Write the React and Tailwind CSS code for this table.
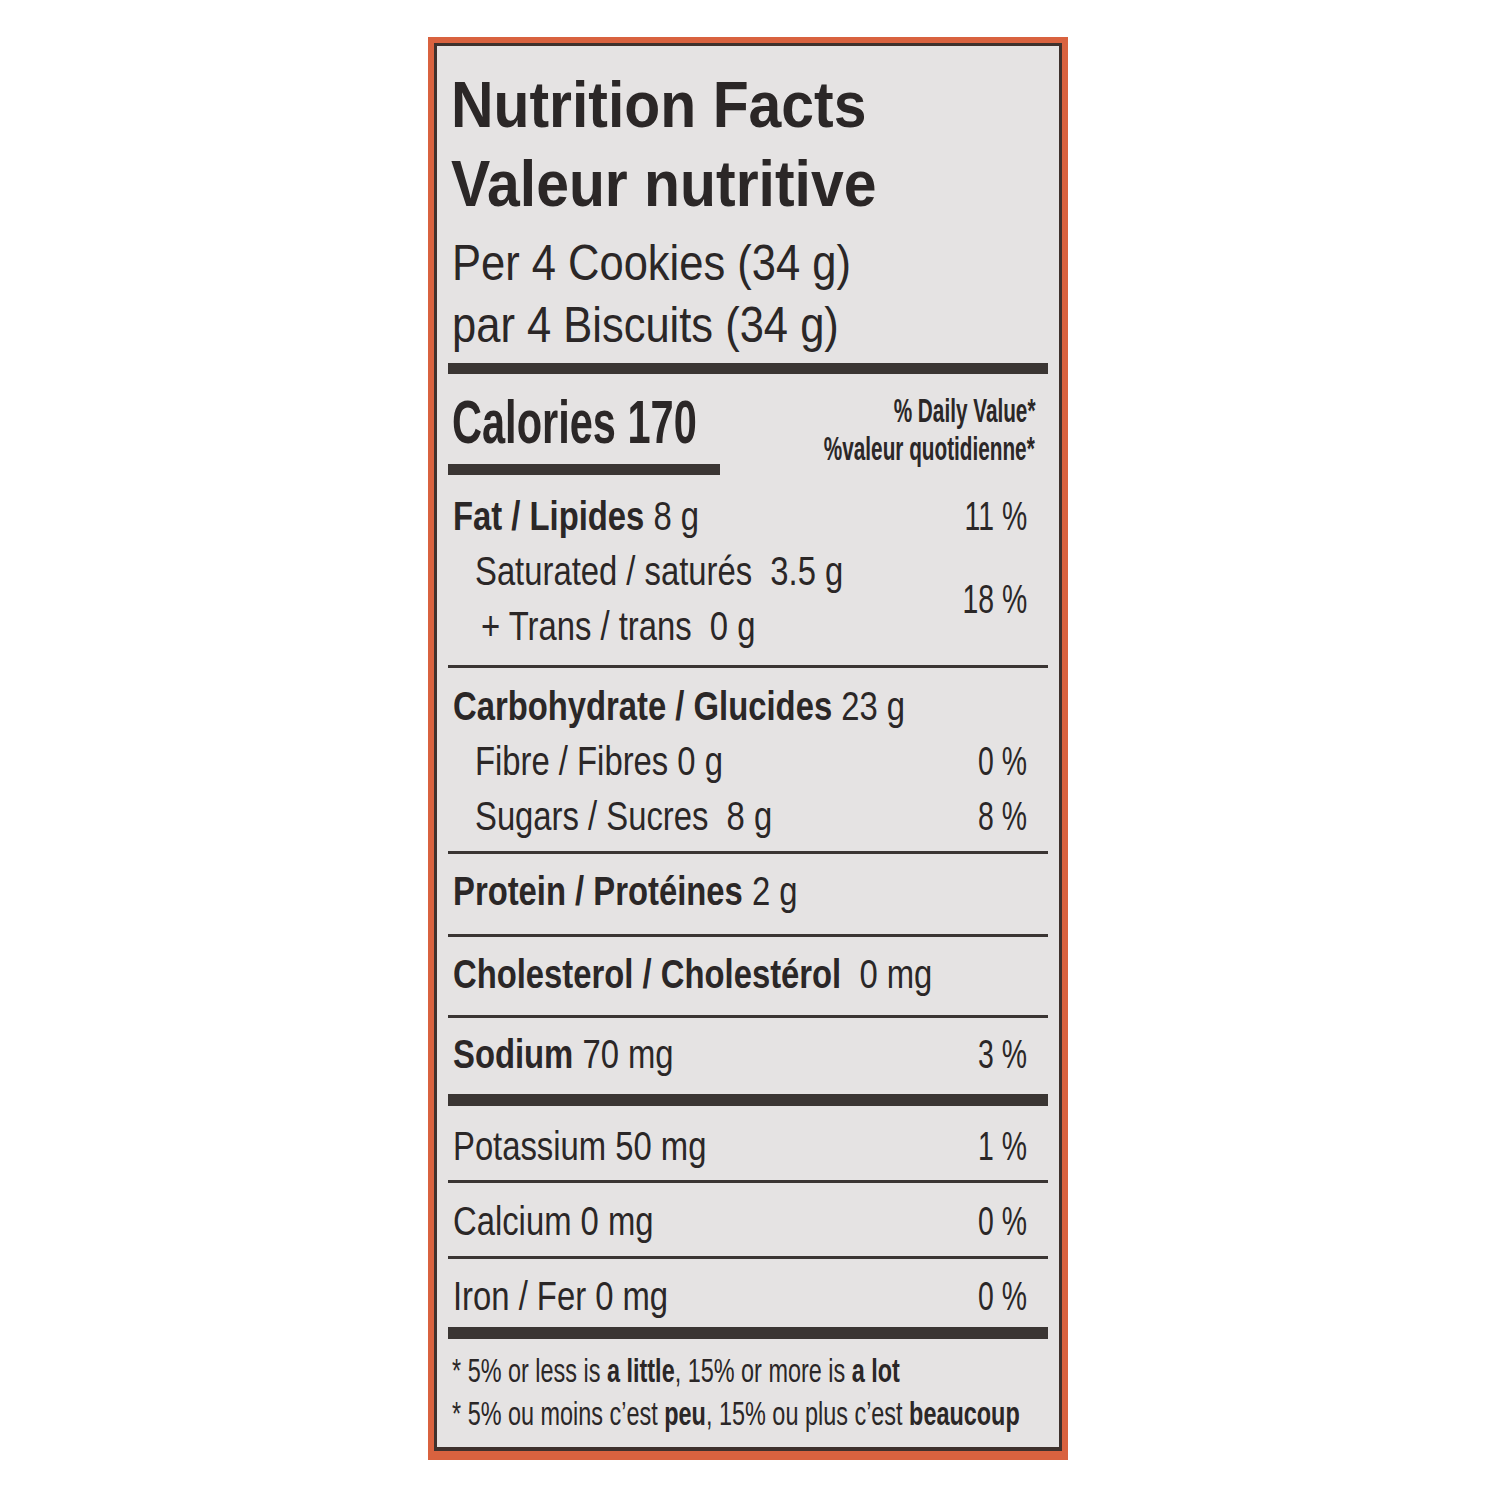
export default function App() {
  return (
    <div className="min-h-[1500px] bg-white pt-[37px] pl-[428px] font-['Liberation_Sans',Arial,sans-serif] text-[#2b2727]">
      <div className="w-[640px] border-[6px] border-b-[9px] border-[#d9623f]">
        <div className="border-[3px] border-b-[4px] border-[#3e312d] bg-[#e5e3e3] px-[11px] pt-[20px] pb-[12px]">
          {/* title */}
          <div className="pl-[3px] text-[64px] leading-[79px] font-bold">
            <div>
              <span className="inline-block origin-left scale-x-[0.92] whitespace-nowrap">Nutrition Facts</span>
            </div>
            <div>
              <span className="inline-block origin-left scale-x-[0.92] whitespace-nowrap">Valeur nutritive</span>
            </div>
          </div>
          <div className="mt-[8px] pl-[4px] text-[50px] leading-[62px]">
            <div>
              <span className="inline-block origin-left scale-x-[0.87] whitespace-nowrap">Per 4 Cookies (34 g)</span>
            </div>
            <div>
              <span className="inline-block origin-left scale-x-[0.87] whitespace-nowrap">par 4 Biscuits (34 g)</span>
            </div>
          </div>

          <div className="mt-[7px] h-[11px] bg-[#3a3533]" />

          {/* calories */}
          <div className="flex pt-[17px]">
            <div className="w-[272px] shrink-0">
              <div className="pl-[4px] text-[62px] leading-[61px] font-bold">
                <span className="inline-block origin-left scale-x-[0.67] whitespace-nowrap">Calories 170</span>
              </div>
              <div className="mt-[12px] h-[11px] w-[272px] bg-[#3a3533]" />
            </div>
            <div className="min-w-0 flex-1 pr-[13px] text-[34px] leading-[38px] font-bold">
              <div className="flex justify-end">
                <span className="inline-block shrink-0 origin-right scale-x-[0.61] whitespace-nowrap">% Daily Value*</span>
              </div>
              <div className="flex justify-end">
                <span className="inline-block shrink-0 origin-right scale-x-[0.61] whitespace-nowrap">%valeur quotidienne*</span>
              </div>
            </div>
          </div>

          {/* fat */}
          <div className="mt-[14px] text-[40px] leading-[55px]">
            <div className="flex justify-between pl-[5px] pr-[21px]">
              <span className="inline-block origin-left scale-x-[0.82] whitespace-nowrap">
                <span className="font-bold">Fat / Lipides</span> 8 g
              </span>
              <span className="inline-block origin-right scale-x-[0.71] whitespace-nowrap">11 %</span>
            </div>
            <div className="flex justify-between pr-[21px]">
              <div>
                <div className="pl-[27px]">
                  <span className="inline-block origin-left scale-x-[0.82] whitespace-nowrap">Saturated / saturés&nbsp; 3.5 g</span>
                </div>
                <div className="pl-[33px]">
                  <span className="inline-block origin-left scale-x-[0.82] whitespace-nowrap">+ Trans / trans&nbsp; 0 g</span>
                </div>
              </div>
              <span className="inline-block self-center origin-right scale-x-[0.71] whitespace-nowrap">18 %</span>
            </div>
          </div>

          <div className="mt-[11px] h-[3px] bg-[#3a3533]" />

          {/* carbohydrate */}
          <div className="mt-[11px] text-[40px] leading-[55px]">
            <div className="pl-[5px]">
              <span className="inline-block origin-left scale-x-[0.82] whitespace-nowrap">
                <span className="font-bold">Carbohydrate / Glucides</span> 23 g
              </span>
            </div>
            <div className="flex justify-between pl-[27px] pr-[21px]">
              <span className="inline-block origin-left scale-x-[0.82] whitespace-nowrap">Fibre / Fibres 0 g</span>
              <span className="inline-block origin-right scale-x-[0.71] whitespace-nowrap">0 %</span>
            </div>
            <div className="flex justify-between pl-[27px] pr-[21px]">
              <span className="inline-block origin-left scale-x-[0.82] whitespace-nowrap">Sugars / Sucres&nbsp; 8 g</span>
              <span className="inline-block origin-right scale-x-[0.71] whitespace-nowrap">8 %</span>
            </div>
          </div>

          <div className="mt-[7px] h-[3px] bg-[#3a3533]" />

          <div className="mt-[10px] pl-[5px] text-[40px] leading-[55px]">
            <span className="inline-block origin-left scale-x-[0.82] whitespace-nowrap">
              <span className="font-bold">Protein / Protéines</span> 2 g
            </span>
          </div>

          <div className="mt-[15px] h-[3px] bg-[#3a3533]" />

          <div className="mt-[10px] pl-[5px] text-[40px] leading-[55px]">
            <span className="inline-block origin-left scale-x-[0.82] whitespace-nowrap">
              <span className="font-bold">Cholesterol / Cholestérol</span>&nbsp; 0 mg
            </span>
          </div>

          <div className="mt-[13px] h-[3px] bg-[#3a3533]" />

          <div className="mt-[9px] flex justify-between pl-[5px] pr-[21px] text-[40px] leading-[55px]">
            <span className="inline-block origin-left scale-x-[0.82] whitespace-nowrap">
              <span className="font-bold">Sodium</span> 70 mg
            </span>
            <span className="inline-block origin-right scale-x-[0.71] whitespace-nowrap">3 %</span>
          </div>

          <div className="mt-[12px] h-[12px] bg-[#3a3533]" />

          <div className="mt-[13px] flex justify-between pl-[5px] pr-[21px] text-[40px] leading-[55px]">
            <span className="inline-block origin-left scale-x-[0.82] whitespace-nowrap">Potassium 50 mg</span>
            <span className="inline-block origin-right scale-x-[0.71] whitespace-nowrap">1 %</span>
          </div>

          <div className="mt-[6px] h-[3px] bg-[#3a3533]" />

          <div className="mt-[11px] flex justify-between pl-[5px] pr-[21px] text-[40px] leading-[55px]">
            <span className="inline-block origin-left scale-x-[0.82] whitespace-nowrap">Calcium 0 mg</span>
            <span className="inline-block origin-right scale-x-[0.71] whitespace-nowrap">0 %</span>
          </div>

          <div className="mt-[7px] h-[3px] bg-[#3a3533]" />

          <div className="mt-[10px] flex justify-between pl-[5px] pr-[21px] text-[40px] leading-[55px]">
            <span className="inline-block origin-left scale-x-[0.82] whitespace-nowrap">Iron / Fer 0 mg</span>
            <span className="inline-block origin-right scale-x-[0.71] whitespace-nowrap">0 %</span>
          </div>

          <div className="mt-[3px] h-[12px] bg-[#3a3533]" />

          {/* footnote */}
          <div className="mt-[10px] pl-[4px] text-[33px] leading-[43px]">
            <div>
              <span className="inline-block origin-left scale-x-[0.71] whitespace-nowrap">
                * 5% or less is <span className="font-bold">a little</span>, 15% or more is <span className="font-bold">a lot</span>
              </span>
            </div>
            <div>
              <span className="inline-block origin-left scale-x-[0.71] whitespace-nowrap">
                * 5% ou moins c’est <span className="font-bold">peu</span>, 15% ou plus c’est <span className="font-bold">beaucoup</span>
              </span>
            </div>
          </div>
        </div>
      </div>
    </div>
  );
}
